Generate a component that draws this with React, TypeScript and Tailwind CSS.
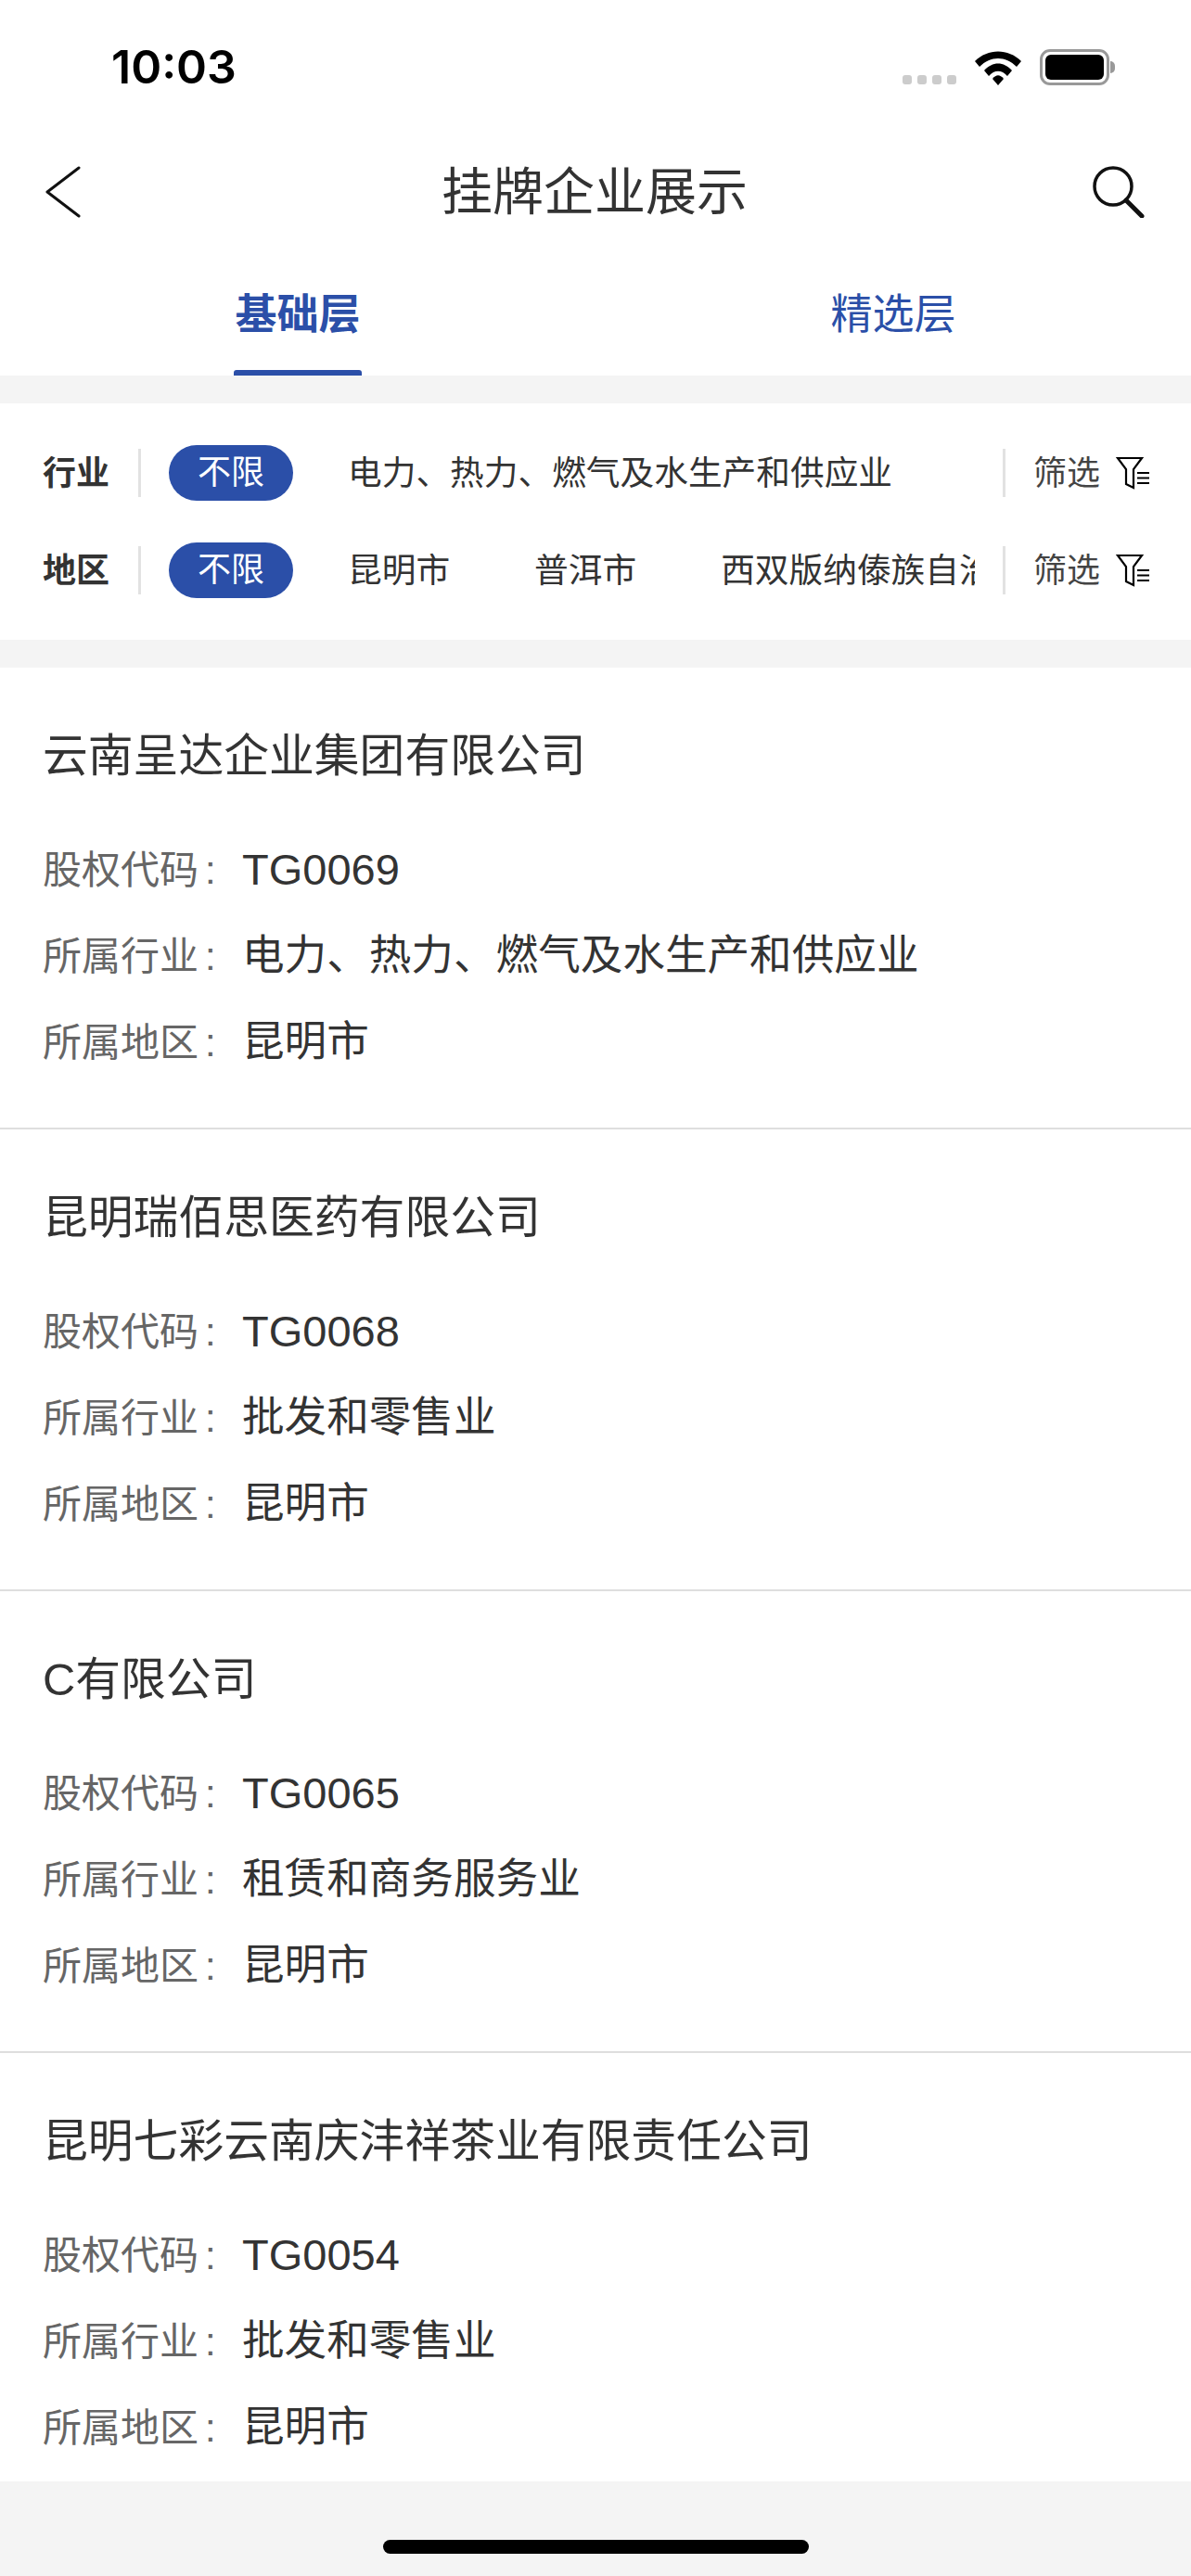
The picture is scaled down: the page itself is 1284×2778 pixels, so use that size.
const FONT = "font-['Liberation_Sans','Noto_Sans_CJK_SC',sans-serif]"

const Companies = [
  { name: '云南呈达企业集团有限公司', code: 'TG0069', industry: '电力、热力、燃气及水生产和供应业', area: '昆明市' },
  { name: '昆明瑞佰思医药有限公司', code: 'TG0068', industry: '批发和零售业', area: '昆明市' },
  { name: 'C有限公司', code: 'TG0065', industry: '租赁和商务服务业', area: '昆明市' },
  { name: '昆明七彩云南庆沣祥茶业有限责任公司', code: 'TG0054', industry: '批发和零售业', area: '昆明市' },
]

const FilterIcon = () => (
  <svg className="block" width="36" height="36" viewBox="0 0 36 36" fill="none" stroke="#000" strokeWidth="2.2">
    <path d="M2 2h26L19 14v20l-8-4V14z" />
    <path d="M23 18h13M23 23.5h13M23 29h13" />
  </svg>
)

const FilterRow = ({ label, items }: { label: string; items: string[] }) => (
  <div className="flex items-center h-[60px]">
    <span className="w-[72px] ml-[46px] pt-[2px] text-[36px] font-bold text-[#333]">{label}</span>
    <div className="w-[3px] h-[52px] ml-[31px] bg-[#e2e2e2]" />
    <span className="ml-[30px] w-[134px] h-[60px] shrink-0 rounded-full bg-[#2b4fa8] text-white text-[36px] flex items-center justify-center">不限</span>
    <div className="ml-[59px] w-[676px] pt-[2px] flex gap-[91px] overflow-hidden whitespace-nowrap text-[36.7px] text-[#333]">
      {items.map((item) => <span key={item}>{item}</span>)}
    </div>
    <div className="w-[3px] h-[52px] ml-[30px] bg-[#e2e2e2]" />
    <span className="ml-[30px] pt-[2px] text-[36px] text-[#444]">筛选</span>
    <span className="ml-[17px]"><FilterIcon /></span>
  </div>
)

const CompanyRow = ({ c, last }: { c: (typeof Companies)[number]; last: boolean }) => (
  <div className={`pl-[46px] pt-[63px] ${last ? 'h-[462px]' : 'h-[498px] border-b-2 border-[#dedede]'}`}>
    <h2 className="text-[48.8px] leading-[64px] text-[#333] font-normal">{c.name}</h2>
    <div className="mt-[59px] flex flex-col gap-[29px]">
      <div className="flex items-center h-[64px]">
        <span className="w-[215px] text-[42px] text-[#666]">股权代码<span className="ml-[7px]">:</span></span>
        <span className="text-[47px] text-[#333]">{c.code}</span>
      </div>
      <div className="flex items-center h-[64px]">
        <span className="w-[215px] text-[42px] text-[#666]">所属行业<span className="ml-[7px]">:</span></span>
        <span className="text-[45.6px] text-[#333]">{c.industry}</span>
      </div>
      <div className="flex items-center h-[64px]">
        <span className="w-[215px] text-[42px] text-[#666]">所属地区<span className="ml-[7px]">:</span></span>
        <span className="text-[45.6px] text-[#333]">{c.area}</span>
      </div>
    </div>
  </div>
)

export default function App() {
  return (
    <div className={`w-[1284px] h-[2778px] bg-[#f4f4f4] overflow-hidden relative ${FONT}`}>
      <div className="bg-white h-[405px]">
        <div className="h-[145px] pl-[120px] pr-[82px] flex justify-between items-center">
          <span className="text-[50px] font-semibold text-black font-['Inter',sans-serif]">10:03</span>
          <div className="flex items-center gap-[19px]">
            <div className="flex gap-[6px] mt-[26px]">
              {[0, 1, 2, 3].map((i) => <div key={i} className="w-[10px] h-[10px] rounded-[3px] bg-[#ccc]" />)}
            </div>
            <svg width="52" height="38" viewBox="0 0 52 38">
              <path d="M1 12 C15 -2 37 -2 51 12 L46 18 C34 6 18 6 6 18z" />
              <path d="M11 22 C20 12 32 12 41 22 L36 28 C30 21 22 21 16 28z" />
              <path d="M20 31 C24 26 28 26 32 31 L26 38z" />
            </svg>
            <div className="flex items-center">
              <div className="w-[75px] h-[39px] rounded-[11px] border-[3px] border-[#999] p-[3px]">
                <div className="w-full h-full rounded-[6px] bg-black" />
              </div>
              <div className="w-[5px] h-[13px] rounded-r-full bg-[#999] ml-[1px]" />
            </div>
          </div>
        </div>
        <div className="h-[125px] pl-[48px] pr-[50px] pb-[1px] flex justify-between items-center">
          <div className="w-[56px]">
            <svg className="block" width="40" height="56" viewBox="0 0 40 56" fill="none" stroke="#111" strokeWidth="3" strokeLinecap="round" strokeLinejoin="round">
              <path d="M37 2 3 28l34 26" />
            </svg>
          </div>
          <h1 className="text-[55px] font-normal text-[#333]">挂牌企业展示</h1>
          <svg className="block" width="56" height="56" viewBox="0 0 56 56" fill="none" stroke="#111" strokeWidth="3.5" strokeLinecap="round">
            <circle cx="22" cy="22" r="20" />
            <path d="M36 37 53 54" strokeWidth="5" />
          </svg>
        </div>
        <div className="h-[135px] flex text-[45px] text-[#2b4fa8]">
          <div className="w-[642px] flex justify-center">
            <div className="w-[138px] h-[135px] flex flex-col items-center justify-between pt-[36px]">
              <span className="font-bold">基础层</span>
              <div className="w-full h-[6px] rounded-t-[3px] bg-[#2b4fa8]" />
            </div>
          </div>
          <div className="w-[642px] flex justify-center pt-[36px]">精选层</div>
        </div>
      </div>
      <div className="mt-[30px] bg-white h-[255px] pt-[45px] flex flex-col gap-[45px]">
        <FilterRow label="行业" items={['电力、热力、燃气及水生产和供应业']} />
        <FilterRow label="地区" items={['昆明市', '普洱市', '西双版纳傣族自治州']} />
      </div>
      <div className="mt-[30px] bg-white">
        {Companies.map((c, i) => <CompanyRow key={c.code} c={c} last={i === Companies.length - 1} />)}
      </div>
      <div className="absolute bottom-[24px] left-[413px] w-[459px] h-[15px] rounded-full bg-black" />
    </div>
  )
}
